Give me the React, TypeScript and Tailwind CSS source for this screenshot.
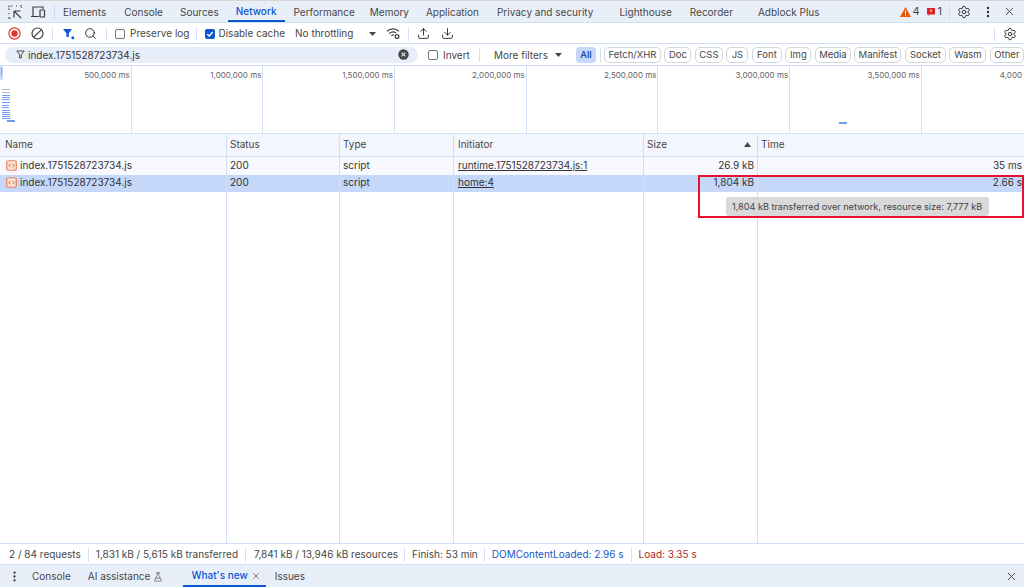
import React from "react";
import { X, MoreVertical, Search, Upload, Download, FlaskConical, Settings } from "lucide-react";

const tabs: [string, string][] = [
  ["Elements", "ml-[63px]"],
  ["Console", "ml-[18px]"],
  ["Sources", "ml-[17px]"],
  ["Performance", "ml-[9px]"],
  ["Memory", "ml-[15px]"],
  ["Application", "ml-[17px]"],
  ["Privacy and security", "ml-[18px]"],
  ["Lighthouse", "ml-[26px]"],
  ["Recorder", "ml-[18px]"],
  ["Adblock Plus", "ml-[25px]"],
];

const chips: [string, string][] = [
  ["Fetch/XHR", "w-[57px]"],
  ["Doc", "w-[27px]"],
  ["CSS", "w-[28px]"],
  ["JS", "w-[22px]"],
  ["Font", "w-[30px]"],
  ["Img", "w-[26px]"],
  ["Media", "w-[36px]"],
  ["Manifest", "w-[47px]"],
  ["Socket", "w-[41px]"],
  ["Wasm", "w-[37px]"],
  ["Other", "w-[34px]"],
];

const ticks = ["500,000 ms", "1,000,000 ms", "1,500,000 ms", "2,000,000 ms", "2,500,000 ms", "3,000,000 ms", "3,500,000 ms"];

function Sep() {
  return <div className="h-[14px] w-px bg-[#d3e0f5] shrink-0" />;
}

function FileIcon() {
  return (
    <svg width="11" height="11" viewBox="0 0 11 11" className="shrink-0">
      <rect x="0.75" y="0.75" width="9.5" height="9.5" rx="1.5" fill="#fbe3d9" stroke="#e8825f" strokeWidth="1.2" />
      <path d="M4.4 3.8 2.9 5.5l1.5 1.7M6.6 3.8l1.5 1.7-1.5 1.7" fill="none" stroke="#d9603a" strokeWidth="1" />
    </svg>
  );
}

const rows = [
  { name: "index.1751528723734.js", status: "200", type: "script", init: "runtime.1751528723734.js:1", size: "26.9 kB", time: "35 ms", bg: "bg-[#f7f9fe]" },
  { name: "index.1751528723734.js", status: "200", type: "script", init: "home:4", size: "1,804 kB", time: "2.66 s", bg: "bg-[#c5d8fa]" },
];

const cols = ["w-[227px]", "w-[113px]", "w-[114px]", "w-[190px]", "w-[114px]", "flex-1"];

export default function App() {
  return (
    <div className="w-[1024px] h-[587px] overflow-hidden flex flex-col bg-white text-[#474747] text-[10px] relative" style={{ fontFamily: "Inter, 'Liberation Sans', sans-serif" }}>
      {/* Tab strip */}
      <div className="h-[23px] shrink-0 bg-[#e9eff9] border-t border-t-[#d6d6d6] border-b border-[#d0dff6] flex items-center relative">
        <svg width="16" height="16" viewBox="0 0 16 16" className="absolute left-[7px] top-[3px]" fill="none" stroke="#3c3c3c" strokeWidth="1.2">
          <path d="M2 6V2h4M9 2h1M13 2h1.5v2M2 9v1M2 13v1.5h2" strokeDasharray="1.6 1.2" />
          <path d="M7 7h6.5M7 7v6.5M7 7l7 7" />
        </svg>
        <svg width="16" height="14" viewBox="0 0 16 14" className="absolute left-[30px] top-[4px]" fill="none" stroke="#3c3c3c" strokeWidth="1.2">
          <path d="M3 11V2h10v2M1 11.5h8" />
          <rect x="10" y="5" width="4.5" height="7" rx="0.6" />
        </svg>
        <div className="absolute left-[54px] top-[4px] h-[14px] w-px bg-[#cfdcf3]" />
        <div className="flex items-center h-full whitespace-nowrap pt-[1px]">
          {tabs.slice(0, 3).map(([t, c]) => (
            <span key={t} className={c}>{t}</span>
          ))}
          <span className="ml-[9px] px-[8px] h-full flex items-center text-[#0b57d0] font-medium border-b-2 border-[#0b57d0]">Network</span>
          {tabs.slice(3).map(([t, c]) => (
            <span key={t} className={c}>{t}</span>
          ))}
        </div>
        <div className="ml-auto flex items-center h-full">
          <svg width="11" height="10" viewBox="0 0 11 10"><path d="M5.5 0 11 10H0z" fill="#e8590c" /><rect x="5" y="3.5" width="1" height="3.5" fill="#fff" /><rect x="5" y="7.8" width="1" height="1" fill="#fff" /></svg>
          <span className="ml-[1px] text-[11px]">4</span>
          <svg width="10" height="10" viewBox="0 0 10 10" className="ml-[6px]"><path d="M1 1h8v6.5H4L2.6 9V7.5H1z" fill="#dc2626" /><rect x="4.5" y="2.4" width="1" height="2.6" fill="#fff" /></svg>
          <span className="ml-[2px] text-[11px]">1</span>
          <div className="ml-[7px] h-[14px] w-px bg-[#cfdcf3]" />
          <Settings size={14} strokeWidth={1.7} className="ml-[7px] text-[#333]" />
          <MoreVertical size={14} strokeWidth={2.2} className="ml-[10px] text-[#333]" />
          <X size={13} strokeWidth={1.5} className="ml-[8px] mr-[8px] text-[#333]" />
        </div>
      </div>

      {/* Toolbar */}
      <div className="h-[21px] shrink-0 border-b border-[#d0dff6] flex items-center whitespace-nowrap relative pt-[1px]">
        <svg width="13" height="13" viewBox="0 0 13 13" className="ml-[8px] shrink-0"><circle cx="6.5" cy="6.5" r="5.6" fill="none" stroke="#dc3a2c" strokeWidth="1.2" /><circle cx="6.5" cy="6.5" r="3.2" fill="#dc3a2c" /></svg>
        <svg width="13" height="13" viewBox="0 0 13 13" className="ml-[10px] shrink-0" fill="none" stroke="#3c3c3c" strokeWidth="1.2"><circle cx="6.5" cy="6.5" r="5.5" /><path d="M2.8 10.2 10.2 2.8" /></svg>
        <div className="ml-[8px]"><Sep /></div>
        <svg width="13" height="13" viewBox="0 0 13 13" className="ml-[9px] shrink-0"><path d="M1 2h9L6.8 6.3V10H4.4V6.3z" fill="#0b57d0" /><circle cx="10.8" cy="10.8" r="1.5" fill="#0b57d0" /></svg>
        <Search size={13} strokeWidth={1.8} className="ml-[9px] shrink-0 text-[#333]" />
        <div className="ml-[9px]"><Sep /></div>
        <div className="ml-[8px] w-[10px] h-[10px] rounded-[2px] border border-[#747775] bg-white shrink-0" />
        <span className="ml-[5px]">Preserve log</span>
        <div className="ml-[7px]"><Sep /></div>
        <div className="ml-[8px] w-[10px] h-[10px] rounded-[2px] bg-[#0b57d0] shrink-0 flex items-center justify-center">
          <svg width="8" height="8" viewBox="0 0 8 8" fill="none" stroke="#fff" strokeWidth="1.3"><path d="M1.2 4.2 3.2 6l3.6-4" /></svg>
        </div>
        <span className="ml-[3px]">Disable cache</span>
        <span className="ml-[10px]">No throttling</span>
        <svg width="7" height="4" viewBox="0 0 7 4" className="ml-[16px] shrink-0"><path d="M0 0h7L3.5 4z" fill="#474747" /></svg>
        <svg width="15" height="13" viewBox="0 0 15 13" className="ml-[10px] shrink-0" fill="none" stroke="#3c3c3c" strokeWidth="1.2"><path d="M1 4.2C4.5 1 9.5 1 13 4.2M3.2 6.5C5.2 4.8 8 4.6 10.2 5.8M5.4 8.7c.8-.7 1.6-.9 2.4-.8" /><circle cx="11" cy="9.5" r="1.9" /></svg>
        <div className="ml-[7px]"><Sep /></div>
        <Upload size={13} strokeWidth={1.8} className="ml-[8px] shrink-0 text-[#333]" />
        <Download size={13} strokeWidth={1.8} className="ml-[11px] shrink-0 text-[#333]" />
        <div className="ml-auto flex items-center">
          <Sep />
          <Settings size={14} strokeWidth={1.7} className="ml-[8px] mr-[7px] text-[#333]" />
        </div>
      </div>

      {/* Filter row */}
      <div className="h-[22px] shrink-0 border-b border-[#d0dff6] flex items-center whitespace-nowrap">
        <div className="ml-[5px] w-[413px] h-[16px] rounded-full bg-[#e8eef9] flex items-center shrink-0">
          <svg width="9" height="9" viewBox="0 0 9 9" className="ml-[11px] shrink-0" fill="none" stroke="#474747" strokeWidth="1"><path d="M.8 1h7.4L5.3 4.6V8H3.7V4.6z" /></svg>
          <span className="ml-[3px] text-[#333] pt-[1px]">index.1751528723734.js</span>
          <svg width="11" height="11" viewBox="0 0 11 11" className="ml-auto mr-[9px] shrink-0"><circle cx="5.5" cy="5.5" r="5.2" fill="#474747" /><path d="M3.6 3.6l3.8 3.8M7.4 3.6 3.6 7.4" stroke="#e8eef9" strokeWidth="1.1" /></svg>
        </div>
        <div className="ml-[10px] w-[10px] h-[10px] rounded-[2px] border border-[#747775] bg-white shrink-0" />
        <span className="ml-[5px] pt-[1px]">Invert</span>
        <div className="ml-[9px]"><Sep /></div>
        <span className="ml-[14px] pt-[1px]">More filters</span>
        <svg width="7" height="4" viewBox="0 0 7 4" className="ml-[7px] shrink-0"><path d="M0 0h7L3.5 4z" fill="#474747" /></svg>
        <div className="ml-[14px] w-[20px] h-[16px] rounded-[4px] bg-[#c5d8fa] text-[#0842a0] font-medium flex items-center justify-center shrink-0 text-[9.5px] pt-[1px]">All</div>
        <div className="ml-[4px]"><Sep /></div>
        <div className="ml-[3px] flex items-center gap-[3.5px]">
          {chips.map(([t, w]) => (
            <div key={t} className={`${w} h-[16px] rounded-[5px] border border-[#d3d7dc] flex items-center justify-center text-[9.5px] shrink-0 pt-[1px]`}>{t}</div>
          ))}
        </div>
      </div>

      {/* Overview */}
      <div className="h-[68px] shrink-0 border-b border-[#d0dff6] flex relative">
        {ticks.map((t) => (
          <div key={t} className="w-[131.7px] shrink-0 text-right pr-[1px] pt-[3px] text-[8px] text-[#5f6368] whitespace-nowrap border-r border-[#d3e0f5]">{t}</div>
        ))}
        <div className="flex-1 text-right pr-[2px] pt-[3px] text-[8px] text-[#5f6368] whitespace-nowrap">4,000</div>
        <svg width="20" height="60" viewBox="0 0 20 60" className="absolute left-0 top-0">
          <rect x="0" y="0" width="3" height="14" rx="1" fill="#c5d8fa" />
          <rect x="1" y="2" width="1" height="7" fill="#7aa5ee" />
          <rect x="2" y="23" width="8" height="1" fill="#b0b5bb" />
          <rect x="2" y="26" width="8" height="1" fill="#b0b5bb" />
          <rect x="2" y="29" width="8" height="1" fill="#6f9df0" />
          <rect x="2" y="31" width="8" height="1" fill="#6f9df0" />
          <rect x="2" y="33" width="8" height="1" fill="#6f9df0" />
          <rect x="2" y="36" width="8" height="1" fill="#6f9df0" />
          <rect x="2" y="39" width="7" height="1" fill="#6f9df0" />
          <rect x="2" y="41" width="7" height="1" fill="#6f9df0" />
          <rect x="2" y="44" width="8" height="1" fill="#6f9df0" />
          <rect x="2" y="46" width="8" height="1" fill="#6f9df0" />
          <rect x="2" y="48" width="8" height="1" fill="#6f9df0" />
          <rect x="2" y="50" width="8" height="1" fill="#6f9df0" />
          <rect x="2" y="52" width="9" height="1" fill="#6f9df0" />
          <rect x="7" y="54" width="8" height="2" fill="#6f9df0" />
        </svg>
        <div className="absolute left-[839px] top-[56px] w-[8px] h-[2px] bg-[#6f9df0]" />
      </div>

      {/* Table */}
      <div className="flex-1 flex flex-col min-h-0 relative">
        <div className="h-[23px] shrink-0 flex bg-[#f3f6fd] border-b border-[#d0dff6]">
          {["Name", "Status", "Type", "Initiator", "Size", "Time"].map((h, i) => (
            <div key={h} className={`${cols[i]} shrink-0 flex items-center pb-[1px] ${i === 0 ? "pl-[5px]" : i === 3 ? "pl-[4px]" : "pl-[3px]"} ${i < 5 ? "border-r border-[#d0dff6]" : ""}`}>
              {h}
              {h === "Size" && <svg width="7" height="5" viewBox="0 0 7 5" className="ml-auto mr-[6px]"><path d="M0 5h7L3.5 0z" fill="#474747" /></svg>}
            </div>
          ))}
        </div>
        {rows.map((r) => (
          <div key={r.init} className={`h-[17.5px] shrink-0 flex items-center ${r.bg} text-[#333]`}>
            <div className={`${cols[0]} shrink-0 h-full flex items-center pb-[1px] pl-[6px] gap-[3px] border-r border-[#d0dff6] whitespace-nowrap`}><FileIcon />{r.name}</div>
            <div className={`${cols[1]} shrink-0 h-full flex items-center pb-[1px] pl-[3px] border-r border-[#d0dff6]`}>{r.status}</div>
            <div className={`${cols[2]} shrink-0 h-full flex items-center pb-[1px] pl-[3px] border-r border-[#d0dff6]`}>{r.type}</div>
            <div className={`${cols[3]} shrink-0 h-full flex items-center pb-[1px] pl-[4px] border-r border-[#d0dff6] underline`}>{r.init}</div>
            <div className={`${cols[4]} shrink-0 h-full flex items-center pb-[1px] justify-end pr-[3px] border-r border-[#d0dff6]`}>{r.size}</div>
            <div className={`${cols[5]} h-full flex items-center pb-[1px] justify-end pr-[2px] whitespace-nowrap`}>{r.time}</div>
          </div>
        ))}
        <div className="flex-1 flex">
          {cols.map((c, i) => (
            <div key={i} className={`${c} shrink-0 ${i < 5 ? "border-r border-[#d0dff6]" : ""}`} />
          ))}
        </div>
        {/* Tooltip and annotation */}
        <div className="absolute left-[726px] top-[63px] h-[19px] pl-[6px] pr-[7px] rounded-[3px] bg-[#d9d9d9] flex items-center text-[9.1px] text-[#444] whitespace-nowrap">1,804 kB transferred over network, resource size: 7,777 kB</div>
        <div className="absolute left-[698px] top-[41px] w-[326px] h-[43px] border-2 border-[#e8112d]" />
      </div>

      {/* Status bar */}
      <div className="h-[22px] shrink-0 border-t border-b border-[#d0dff6] flex items-center whitespace-nowrap pt-[1px]">
        <span className="ml-[9px]">2 / 84 requests</span>
        <div className="ml-[7px]"><Sep /></div>
        <span className="ml-[7px]">1,831 kB / 5,615 kB transferred</span>
        <div className="ml-[7px]"><Sep /></div>
        <span className="ml-[8px]">7,841 kB / 13,946 kB resources</span>
        <div className="ml-[6px]"><Sep /></div>
        <span className="ml-[7px]">Finish: 53 min</span>
        <div className="ml-[6px]"><Sep /></div>
        <span className="ml-[7px] text-[#1a56c4]">DOMContentLoaded: 2.96 s</span>
        <div className="ml-[7px]"><Sep /></div>
        <span className="ml-[7px] text-[#b3261e]">Load: 3.35 s</span>
      </div>

      {/* Drawer */}
      <div className="h-[22px] shrink-0 bg-[#e9eff9] flex items-center whitespace-nowrap pt-[1px]">
        <MoreVertical size={13} strokeWidth={2.2} className="ml-[8px] shrink-0 text-[#333]" />
        <span className="ml-[11px]">Console</span>
        <span className="ml-[17px]">AI assistance</span>
        <FlaskConical size={10} strokeWidth={1.5} className="ml-[3px] shrink-0" />
        <div className="ml-[20px] pl-[8px] pr-[5px] h-full flex items-center text-[#0b57d0] font-medium border-b-2 border-[#0b57d0]">
          What's new
          <X size={10} strokeWidth={1.6} className="ml-[3px] text-[#474747]" />
        </div>
        <span className="ml-[9px]">Issues</span>
        <X size={13} strokeWidth={1.5} className="ml-auto mr-[6px] shrink-0 text-[#333]" />
      </div>
    </div>
  );
}
